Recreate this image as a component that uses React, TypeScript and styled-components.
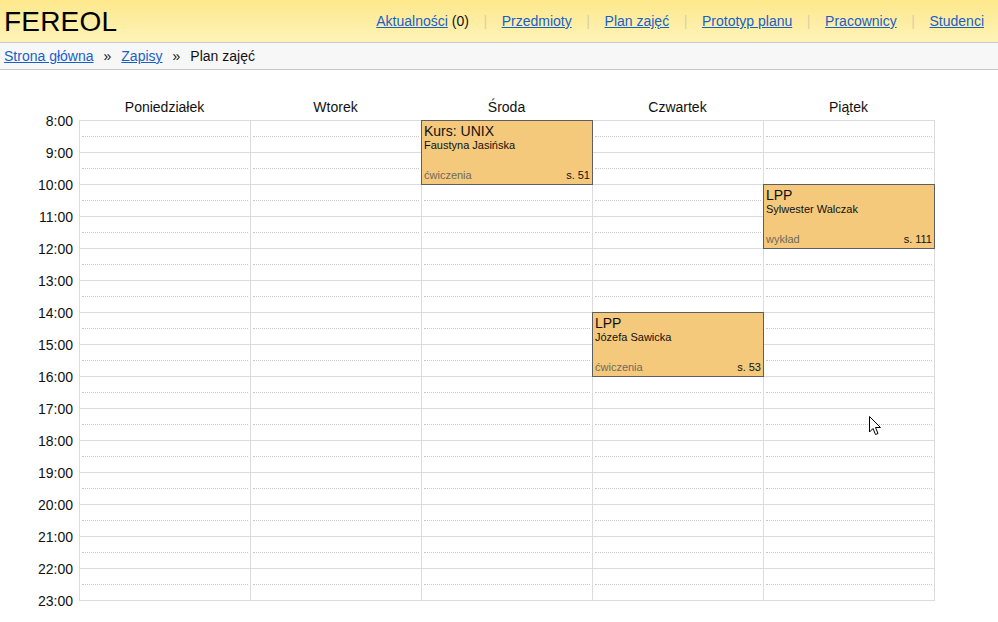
import React from "react";
import styled, { createGlobalStyle } from "styled-components";

const GlobalStyle = createGlobalStyle`
  html, body { margin: 0; padding: 0; background: #fff; }
  body { font-family: "Liberation Sans", Arial, sans-serif; color: #111; }
  * { box-sizing: border-box; }
`;

const HOUR_H = 32;
const hours = Array.from({ length: 15 }, (_, i) => 8 + i);
const days = ["Poniedziałek", "Wtorek", "Środa", "Czwartek", "Piątek"];

type Ev = { day: number; start: number; end: number; title: string; teacher: string; kind: string; room: string };
const events: Ev[] = [
  { day: 2, start: 8, end: 10, title: "Kurs: UNIX", teacher: "Faustyna Jasińska", kind: "ćwiczenia", room: "s. 51" },
  { day: 4, start: 10, end: 12, title: "LPP", teacher: "Sylwester Walczak", kind: "wykład", room: "s. 111" },
  { day: 3, start: 14, end: 16, title: "LPP", teacher: "Józefa Sawicka", kind: "ćwiczenia", room: "s. 53" },
];

const Header = styled.header`
  height: 43px;
  display: flex;
  align-items: center;
  justify-content: space-between;
  padding: 0 14px 0 4px;
  background: linear-gradient(to bottom, #fde88c 0%, #fff3b8 100%);
  border-bottom: 1px solid #c9c9c9;
`;

const Logo = styled.h1`
  margin: 0;
  font-size: 28px;
  font-weight: normal;
  line-height: 1;
  color: #000;
  letter-spacing: 0.2px;
  padding-top: 1px;
`;

const Nav = styled.nav`
  display: flex;
  align-items: center;
  font-size: 14px;
  padding-top: 0px;
`;

const NavItem = styled.span`
  display: flex;
  align-items: center;
  color: #111;
`;

const Sep = styled.span`
  color: #d8cfa8;
  margin: 0 14.6px;
`;

const Link = styled.a`
  color: #1a5fc8;
  text-decoration: underline;
  cursor: pointer;
`;

const Crumbs = styled.div`
  height: 27px;
  display: flex;
  align-items: center;
  padding: 0 4px;
  background: #f7f7f7;
  border-bottom: 1px solid #c9c9c9;
  font-size: 14px;
  color: #111;
`;

const CrumbSep = styled.span`
  margin: 0 10px;
`;

const Main = styled.main`
  padding: 29px 0 20px 0;
`;

const Schedule = styled.div`
  display: grid;
  grid-template-columns: 79px repeat(5, 171px) 1px;
  grid-template-rows: 21px auto;
  align-items: start;
`;

const DayHead = styled.div`
  font-size: 14px;
  text-align: center;
  line-height: 16px;
`;

const TimeCol = styled.div`
  display: flex;
  flex-direction: column;
  margin-top: -7px;
`;

const TimeLabel = styled.div`
  height: ${HOUR_H}px;
  font-size: 14px;
  line-height: 16px;
  text-align: right;
  padding-right: 6px;
  &:last-child { height: 16px; }
`;

const DayCol = styled.div<{ $last?: boolean }>`
  position: relative;
  border-left: 1px solid #dcdcdc;
  border-right: ${(p) => (p.$last ? "1px solid #dcdcdc" : "none")};
  border-bottom: 1px solid #dcdcdc;
  grid-column: span ${(p) => (p.$last ? 2 : 1)};
`;

const HourCell = styled.div`
  position: relative;
  height: ${HOUR_H}px;
  border-top: 1px solid #dcdcdc;
  &::after {
    content: "";
    position: absolute;
    left: 2px;
    right: 2px;
    top: 15px;
    border-top: 1px dotted #c8c8c8;
  }
`;

const Event = styled.div`
  position: absolute;
  left: -1px;
  right: -1px;
  background: #f4c97c;
  border: 1px solid #5e5e5e;
  padding: 2px 2px 2px 2px;
  display: flex;
  flex-direction: column;
  z-index: 1;
`;

const EvTitle = styled.div`
  font-size: 14px;
  line-height: 16px;
  color: #111;
`;

const EvTeacher = styled.div`
  font-size: 11px;
  line-height: 13px;
  color: #111;
`;

const EvFoot = styled.div`
  margin-top: auto;
  display: flex;
  justify-content: space-between;
  font-size: 11px;
  line-height: 13px;
`;

const EvKind = styled.span`
  color: #6f6a60;
`;

const EvRoom = styled.span`
  color: #111;
`;

const Cursor = styled.svg`
  position: absolute;
  left: 869px;
  top: 416px;
  pointer-events: none;
  z-index: 5;
`;

const Page = styled.div`
  position: relative;
  width: 998px;
  min-height: 622px;
`;

const navLinks = ["Przedmioty", "Plan zajęć", "Prototyp planu", "Pracownicy", "Studenci"];

export default function App() {
  return (
    <Page>
      <GlobalStyle />
      <Header>
        <Logo>FEREOL</Logo>
        <Nav>
          <NavItem>
            <Link>Aktualności</Link>&nbsp;(0)
          </NavItem>
          {navLinks.map((l) => (
            <NavItem key={l}>
              <Sep>|</Sep>
              <Link>{l}</Link>
            </NavItem>
          ))}
        </Nav>
      </Header>
      <Crumbs>
        <Link>Strona główna</Link>
        <CrumbSep>»</CrumbSep>
        <Link>Zapisy</Link>
        <CrumbSep>»</CrumbSep>
        <span>Plan zajęć</span>
      </Crumbs>
      <Main>
        <Schedule>
          <div />
          {days.map((d) => (
            <DayHead key={d}>{d}</DayHead>
          ))}
          <div />
          <TimeCol>
            {[...hours, 23].map((h) => (
              <TimeLabel key={h}>{h}:00</TimeLabel>
            ))}
          </TimeCol>
          {days.map((d, di) => (
            <DayCol key={d} $last={di === days.length - 1}>
              {hours.map((h) => (
                <HourCell key={h} />
              ))}
              {events
                .filter((e) => e.day === di)
                .map((e, i) => (
                  <Event
                    key={i}
                    style={{ top: (e.start - 8) * HOUR_H, height: (e.end - e.start) * HOUR_H + 1 }}
                  >
                    <EvTitle>{e.title}</EvTitle>
                    <EvTeacher>{e.teacher}</EvTeacher>
                    <EvFoot>
                      <EvKind>{e.kind}</EvKind>
                      <EvRoom>{e.room}</EvRoom>
                    </EvFoot>
                  </Event>
                ))}
            </DayCol>
          ))}
        </Schedule>
      </Main>
      <Cursor width="13" height="21" viewBox="0 0 13 21">
        <path d="M0.5 0.5 L0.5 16 L4 12.5 L6.5 18.5 L9 17.5 L6.5 11.5 L11.5 11.5 Z" fill="#fff" stroke="#000" strokeWidth="1" />
      </Cursor>
    </Page>
  );
}
